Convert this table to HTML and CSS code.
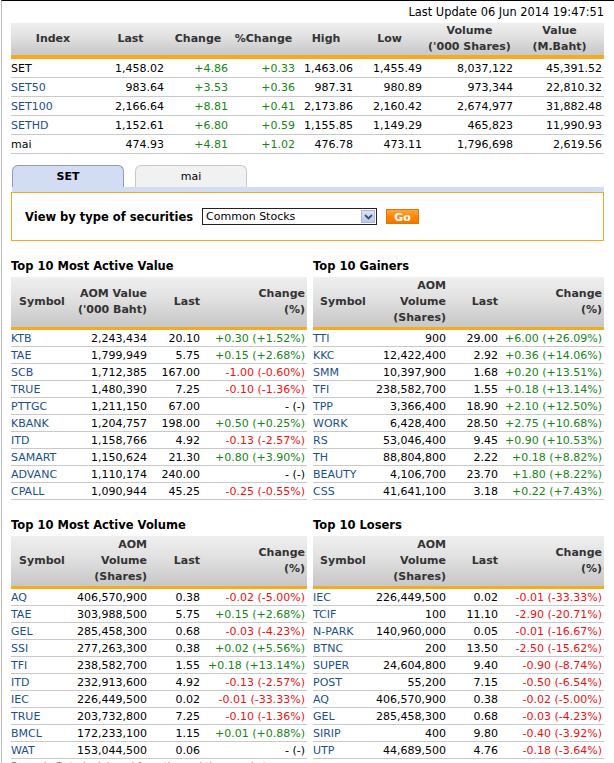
FILE: index.html
```html
<!DOCTYPE html>
<html>
<head>
<meta charset="utf-8">
<title>SET Market Summary</title>
<link rel="stylesheet" href="styles.css">
</head>
<body>
<div class="page">
  <div class="update">Last Update 06 Jun 2014 19:47:51</div>

  <table class="idx">
    <colgroup>
      <col class="c-idx"><col class="c-last"><col class="c-chg"><col class="c-pct">
      <col class="c-high"><col class="c-low"><col class="c-vol"><col class="c-val">
    </colgroup>
    <thead>
      <tr>
        <th>Index</th><th>Last</th><th>Change</th><th>%Change</th>
        <th>High</th><th>Low</th><th>Volume<br>('000 Shares)</th><th>Value<br>(M.Baht)</th>
      </tr>
    </thead>
    <tbody>
      <tr><td class="name">SET</td><td>1,458.02</td><td class="up">+4.86</td><td class="up">+0.33</td><td>1,463.06</td><td>1,455.49</td><td>8,037,122</td><td>45,391.52</td></tr>
      <tr><td class="name link">SET50</td><td>983.64</td><td class="up">+3.53</td><td class="up">+0.36</td><td>987.31</td><td>980.89</td><td>973,344</td><td>22,810.32</td></tr>
      <tr><td class="name link">SET100</td><td>2,166.64</td><td class="up">+8.81</td><td class="up">+0.41</td><td>2,173.86</td><td>2,160.42</td><td>2,674,977</td><td>31,882.48</td></tr>
      <tr><td class="name link">SETHD</td><td>1,152.61</td><td class="up">+6.80</td><td class="up">+0.59</td><td>1,155.85</td><td>1,149.29</td><td>465,823</td><td>11,990.93</td></tr>
      <tr><td class="name">mai</td><td>474.93</td><td class="up">+4.81</td><td class="up">+1.02</td><td>476.78</td><td>473.11</td><td>1,796,698</td><td>2,619.56</td></tr>
    </tbody>
  </table>

  <div class="tabs">
    <div class="tab active">SET</div>
    <div class="tab">mai</div>
  </div>
  <div class="filter">
    <span class="filter-label">View by type of securities</span>
    <div class="select">
      <span class="select-text">Common Stocks</span>
      <span class="select-btn">
        <svg width="9" height="6" viewBox="0 0 9 6"><path d="M1 1 L4.5 4.5 L8 1" fill="none" stroke="#3a4f7a" stroke-width="1.8"/></svg>
      </span>
    </div>
    <div class="go">Go</div>
  </div>

  <div class="grid">
    <section class="sec left">
      <h2>Top 10 Most Active Value</h2>
      <table class="top">
        <colgroup><col class="l1"><col class="l2"><col class="l3"><col class="l4"></colgroup>
        <thead><tr><th class="sym">Symbol</th><th>AOM Value<br>('000 Baht)</th><th>Last</th><th>Change<br>(%)</th></tr></thead>
        <tbody>
          <tr><td class="link">KTB</td><td>2,243,434</td><td>20.10</td><td class="up">+0.30 (+1.52%)</td></tr>
          <tr><td class="link">TAE</td><td>1,799,949</td><td>5.75</td><td class="up">+0.15 (+2.68%)</td></tr>
          <tr><td class="link">SCB</td><td>1,712,385</td><td>167.00</td><td class="dn">-1.00 (-0.60%)</td></tr>
          <tr><td class="link">TRUE</td><td>1,480,390</td><td>7.25</td><td class="dn">-0.10 (-1.36%)</td></tr>
          <tr><td class="link">PTTGC</td><td>1,211,150</td><td>67.00</td><td>- (-)</td></tr>
          <tr><td class="link">KBANK</td><td>1,204,757</td><td>198.00</td><td class="up">+0.50 (+0.25%)</td></tr>
          <tr><td class="link">ITD</td><td>1,158,766</td><td>4.92</td><td class="dn">-0.13 (-2.57%)</td></tr>
          <tr><td class="link">SAMART</td><td>1,150,624</td><td>21.30</td><td class="up">+0.80 (+3.90%)</td></tr>
          <tr><td class="link">ADVANC</td><td>1,110,174</td><td>240.00</td><td>- (-)</td></tr>
          <tr><td class="link">CPALL</td><td>1,090,944</td><td>45.25</td><td class="dn">-0.25 (-0.55%)</td></tr>
        </tbody>
      </table>
    </section>

    <section class="sec right">
      <h2>Top 10 Gainers</h2>
      <table class="top">
        <colgroup><col class="r1"><col class="r2"><col class="r3"><col class="r4"></colgroup>
        <thead><tr><th class="sym">Symbol</th><th>AOM<br>Volume<br>(Shares)</th><th>Last</th><th>Change<br>(%)</th></tr></thead>
        <tbody>
          <tr><td class="link">TTI</td><td>900</td><td>29.00</td><td class="up">+6.00 (+26.09%)</td></tr>
          <tr><td class="link">KKC</td><td>12,422,400</td><td>2.92</td><td class="up">+0.36 (+14.06%)</td></tr>
          <tr><td class="link">SMM</td><td>10,397,900</td><td>1.68</td><td class="up">+0.20 (+13.51%)</td></tr>
          <tr><td class="link">TFI</td><td>238,582,700</td><td>1.55</td><td class="up">+0.18 (+13.14%)</td></tr>
          <tr><td class="link">TPP</td><td>3,366,400</td><td>18.90</td><td class="up">+2.10 (+12.50%)</td></tr>
          <tr><td class="link">WORK</td><td>6,428,400</td><td>28.50</td><td class="up">+2.75 (+10.68%)</td></tr>
          <tr><td class="link">RS</td><td>53,046,400</td><td>9.45</td><td class="up">+0.90 (+10.53%)</td></tr>
          <tr><td class="link">TH</td><td>88,804,800</td><td>2.22</td><td class="up">+0.18 (+8.82%)</td></tr>
          <tr><td class="link">BEAUTY</td><td>4,106,700</td><td>23.70</td><td class="up">+1.80 (+8.22%)</td></tr>
          <tr><td class="link">CSS</td><td>41,641,100</td><td>3.18</td><td class="up">+0.22 (+7.43%)</td></tr>
        </tbody>
      </table>
    </section>

    <section class="sec left">
      <h2>Top 10 Most Active Volume</h2>
      <table class="top">
        <colgroup><col class="l1"><col class="l2"><col class="l3"><col class="l4"></colgroup>
        <thead><tr><th class="sym">Symbol</th><th>AOM<br>Volume<br>(Shares)</th><th>Last</th><th>Change<br>(%)</th></tr></thead>
        <tbody>
          <tr><td class="link">AQ</td><td>406,570,900</td><td>0.38</td><td class="dn">-0.02 (-5.00%)</td></tr>
          <tr><td class="link">TAE</td><td>303,988,500</td><td>5.75</td><td class="up">+0.15 (+2.68%)</td></tr>
          <tr><td class="link">GEL</td><td>285,458,300</td><td>0.68</td><td class="dn">-0.03 (-4.23%)</td></tr>
          <tr><td class="link">SSI</td><td>277,263,300</td><td>0.38</td><td class="up">+0.02 (+5.56%)</td></tr>
          <tr><td class="link">TFI</td><td>238,582,700</td><td>1.55</td><td class="up">+0.18 (+13.14%)</td></tr>
          <tr><td class="link">ITD</td><td>232,913,600</td><td>4.92</td><td class="dn">-0.13 (-2.57%)</td></tr>
          <tr><td class="link">IEC</td><td>226,449,500</td><td>0.02</td><td class="dn">-0.01 (-33.33%)</td></tr>
          <tr><td class="link">TRUE</td><td>203,732,800</td><td>7.25</td><td class="dn">-0.10 (-1.36%)</td></tr>
          <tr><td class="link">BMCL</td><td>172,233,100</td><td>1.15</td><td class="up">+0.01 (+0.88%)</td></tr>
          <tr><td class="link">WAT</td><td>153,044,500</td><td>0.06</td><td>- (-)</td></tr>
        </tbody>
      </table>
    </section>

    <section class="sec right">
      <h2>Top 10 Losers</h2>
      <table class="top">
        <colgroup><col class="r1"><col class="r2"><col class="r3"><col class="r4"></colgroup>
        <thead><tr><th class="sym">Symbol</th><th>AOM<br>Volume<br>(Shares)</th><th>Last</th><th>Change<br>(%)</th></tr></thead>
        <tbody>
          <tr><td class="link">IEC</td><td>226,449,500</td><td>0.02</td><td class="dn">-0.01 (-33.33%)</td></tr>
          <tr><td class="link">TCIF</td><td>100</td><td>11.10</td><td class="dn">-2.90 (-20.71%)</td></tr>
          <tr><td class="link">N-PARK</td><td>140,960,000</td><td>0.05</td><td class="dn">-0.01 (-16.67%)</td></tr>
          <tr><td class="link">BTNC</td><td>200</td><td>13.50</td><td class="dn">-2.50 (-15.62%)</td></tr>
          <tr><td class="link">SUPER</td><td>24,604,800</td><td>9.40</td><td class="dn">-0.90 (-8.74%)</td></tr>
          <tr><td class="link">POST</td><td>55,200</td><td>7.15</td><td class="dn">-0.50 (-6.54%)</td></tr>
          <tr><td class="link">AQ</td><td>406,570,900</td><td>0.38</td><td class="dn">-0.02 (-5.00%)</td></tr>
          <tr><td class="link">GEL</td><td>285,458,300</td><td>0.68</td><td class="dn">-0.03 (-4.23%)</td></tr>
          <tr><td class="link">SIRIP</td><td>400</td><td>9.80</td><td class="dn">-0.40 (-3.92%)</td></tr>
          <tr><td class="link">UTP</td><td>44,689,500</td><td>4.76</td><td class="dn">-0.18 (-3.64%)</td></tr>
        </tbody>
      </table>
    </section>
  </div>

  <div class="remark">Remark: Data is delayed from the real time market</div>
</div>
</body>
</html>
```

FILE: styles.css
```css
html, body {
  margin: 0;
  padding: 0;
  background: #ffffff;
}

body {
  font-family: "DejaVu Sans", Verdana, sans-serif;
  font-size: 11px;
  color: #000;
  width: 614px;
  height: 763px;
  overflow: hidden;
}

.page {
  border-top: 1px solid #000;
  border-left: 1px solid #b8b8b8;
  margin-left: 1px;
  padding-left: 9px;
  min-height: 800px;
}

.update {
  width: 593px;
  text-align: right;
  height: 22px;
  line-height: 22px;
  font-size: 11.4px;
  color: #000;
}

table {
  border-collapse: separate;
  border-spacing: 0;
  table-layout: fixed;
}

/* index table */
.idx { width: 593px; }
.c-idx { width: 84px; }
.c-last { width: 71px; }
.c-chg { width: 64px; }
.c-pct { width: 67px; }
.c-high { width: 58px; }
.c-low { width: 69px; }
.c-vol { width: 91px; }
.c-val { width: 89px; }

th {
  font-weight: bold;
  color: #333;
  background: linear-gradient(#efefef 0%, #e2e2e2 40%, #cdcdcd 85%, #c8c8c8 100%);
  padding: 0;
  line-height: 16px;
}

.idx th {
  height: 32px;
  border-bottom: 4px solid #f6ab1c;
  text-align: center;
}

.idx td {
  height: 16px;
  line-height: 16px;
  padding: 2px 2px 0 0;
  text-align: right;
  border-bottom: 1px solid #c9c9c9;
  white-space: nowrap;
}

.idx td.name {
  text-align: left;
  padding: 2px 0 0 0;
}

.link { color: #1d4f8e; }
.up { color: #168516; }
.dn { color: #ee1111; }

/* tabs */
.tabs {
  margin-top: 11px;
  width: 592px;
  margin-left: 1px;
  display: flex;
  gap: 11px;
  border-bottom: 5px solid #d2dcf3;
}

.tab {
  width: 110px;
  height: 21px;
  line-height: 21px;
  text-align: center;
  border: 1px solid #c9c9c9;
  border-bottom: none;
  border-radius: 6px 6px 0 0;
  background: #f1f1f1;
  color: #000;
}

.tab.active {
  background: #d2dcf3;
  border-color: #8a9cc4;
  font-weight: bold;
}

.filter {
  width: 591px;
  height: 47px;
  border: 1px solid #f6ab1c;
  display: flex;
  align-items: center;
  box-sizing: content-box;
}

.filter-label {
  font-weight: bold;
  font-size: 11.5px;
  margin-left: 13px;
  margin-right: 9px;
}

.select {
  width: 173px;
  height: 15px;
  border: 1px solid #222;
  display: flex;
  align-items: center;
  justify-content: space-between;
  background: #fff;
}

.select-text {
  padding-left: 3px;
  font-size: 11px;
}

.select-btn {
  width: 14px;
  height: 13px;
  margin-right: 1px;
  background: linear-gradient(#d9e3f7, #b9c9ec);
  border: 1px solid #aab8da;
  box-sizing: border-box;
  display: flex;
  align-items: center;
  justify-content: center;
}

.go {
  margin-left: 9px;
  width: 33px;
  height: 15px;
  line-height: 15px;
  box-sizing: border-box;
  text-align: center;
  color: #fff;
  font-weight: bold;
  font-size: 11px;
  background: linear-gradient(#ffa43a, #ff8200 60%, #f27800);
  border: 1px solid #e47300;
}

/* top 10 grid */
.grid {
  margin-top: 17px;
  display: grid;
  grid-template-columns: 296px 291px;
  column-gap: 6px;
  row-gap: 17px;
}

.sec h2 {
  margin: 0 0 3px 0;
  font-size: 11.5px;
  line-height: 16px;
  height: 16px;
  font-weight: bold;
  color: #000;
}

.top { width: 100%; }

.l1 { width: 58px; }
.l2 { width: 80px; }
.l3 { width: 53px; }
.l4 { width: 105px; }

.r1 { width: 56px; }
.r2 { width: 79px; }
.r3 { width: 52px; }
.r4 { width: 104px; }

.top th {
  height: 50px;
  border-bottom: 3px solid #f6ab1c;
  text-align: right;
  padding-right: 2px;
  vertical-align: middle;
}

.top th.sym {
  text-align: center;
  padding: 0 0 0 4px;
}

.top td {
  height: 15px;
  line-height: 15px;
  padding: 1px 2px 0 0;
  text-align: right;
  border-bottom: 1px solid #c9c9c9;
  white-space: nowrap;
}

.top td.link {
  text-align: left;
  padding: 1px 0 0 0;
}

.remark {
  margin-top: 2px;
  font-size: 10px;
  color: #777;
  line-height: 12px;
}
```
